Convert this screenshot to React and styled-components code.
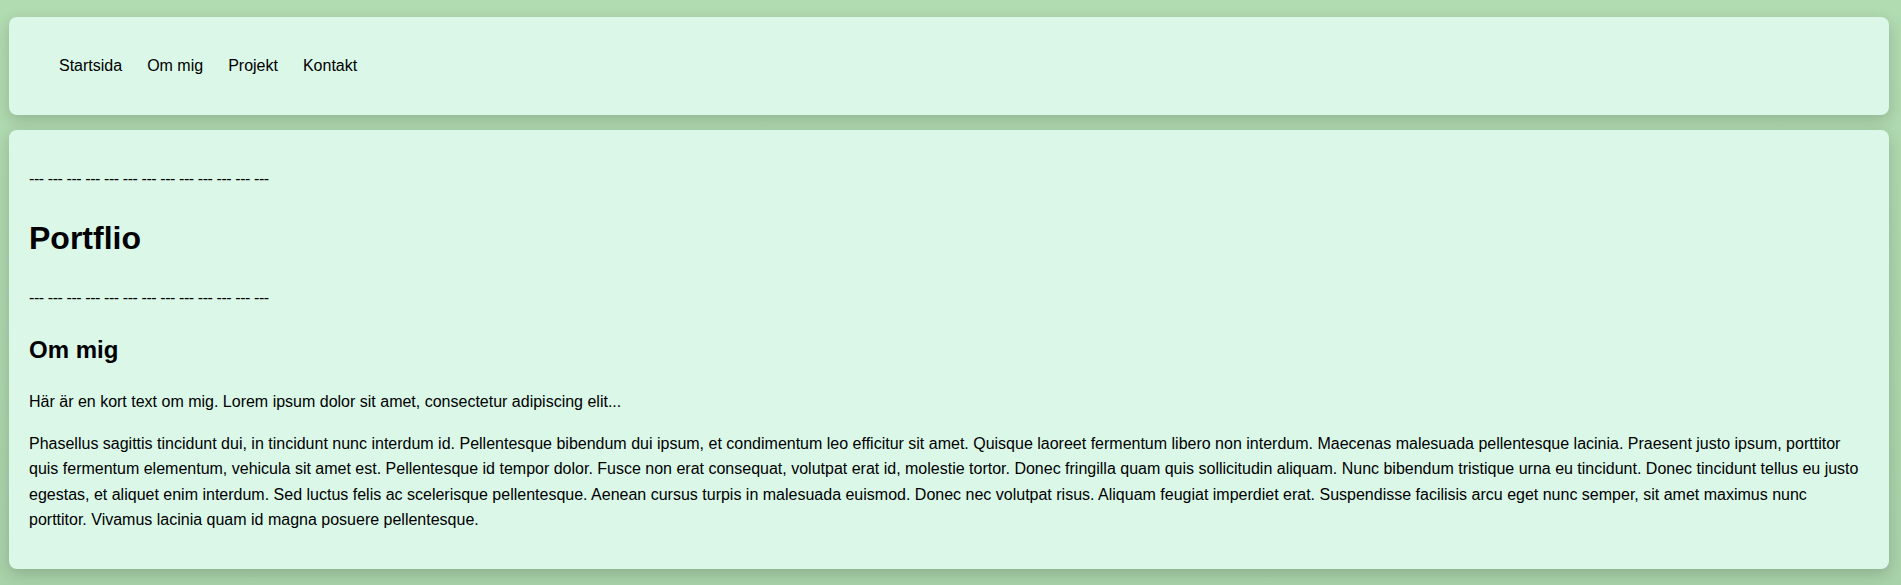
import React from "react";
import styled, { createGlobalStyle } from "styled-components";

const GlobalStyle = createGlobalStyle`
  html, body {
    margin: 0;
    padding: 0;
    background: linear-gradient(#b1dbb1, #a8d2a9);
  }
  body {
    font-family: "Liberation Sans", Arial, sans-serif;
    font-size: 16px;
    line-height: 1.6;
    color: #000;
  }
`;

const Page = styled.div`
  display: flex;
  flex-direction: column;
  gap: 15px;
  padding: 17px 12px 16px 9px;
  min-height: 585px;
  box-sizing: border-box;
`;

const Card = styled.div`
  background: #daf7e8;
  border-radius: 8px;
  box-shadow: 0 5px 15px rgba(0, 0, 0, 0.17);
  padding: ${(p) => p.$pad || "20px"};
`;

const NavList = styled.ul`
  display: flex;
  gap: 25px;
  list-style: none;
  margin: 16px 0;
  padding: 0 0 0 40px;
`;

const NavItem = styled.li`
  a {
    color: #000;
    text-decoration: none;
  }
`;

const Text = styled.p`
  margin: 16px 0;
  font-size: ${(p) => p.$size || "16px"};
  letter-spacing: ${(p) => p.$ls || "normal"};
`;

const Title = styled.h1`
  font-size: 32px;
  margin: 21.44px 0;
  font-weight: bold;
`;

const SubTitle = styled.h2`
  font-size: 24px;
  margin: 19.92px 0;
  font-weight: bold;
`;

const dashes = "--- --- --- --- --- --- --- --- --- --- --- --- ---";

export default function App() {
  return (
    <>
      <GlobalStyle />
      <Page>
        <Card as="header" $pad="20px 10px">
          <nav>
            <NavList>
              <NavItem><a href="#start">Startsida</a></NavItem>
              <NavItem><a href="#om">Om mig</a></NavItem>
              <NavItem><a href="#projekt">Projekt</a></NavItem>
              <NavItem><a href="#kontakt">Kontakt</a></NavItem>
            </NavList>
          </nav>
        </Card>
        <Card as="main">
          <Text $ls="-0.42px">{dashes}</Text>
          <Title>Portflio</Title>
          <Text $ls="-0.42px">{dashes}</Text>
          <SubTitle>Om mig</SubTitle>
          <Text>Här är en kort text om mig. Lorem ipsum dolor sit amet, consectetur adipiscing elit...</Text>
          <Text>
            Phasellus sagittis tincidunt dui, in tincidunt nunc interdum id. Pellentesque bibendum dui ipsum, et condimentum leo efficitur sit amet. Quisque laoreet fermentum libero non interdum. Maecenas malesuada pellentesque lacinia. Praesent justo ipsum, porttitor quis fermentum elementum, vehicula sit amet est. Pellentesque id tempor dolor. Fusce non erat consequat, volutpat erat id, molestie tortor. Donec fringilla quam quis sollicitudin aliquam. Nunc bibendum tristique urna eu tincidunt. Donec tincidunt tellus eu justo egestas, et aliquet enim interdum. Sed luctus felis ac scelerisque pellentesque. Aenean cursus turpis in malesuada euismod. Donec nec volutpat risus. Aliquam feugiat imperdiet erat. Suspendisse facilisis arcu eget nunc semper, sit amet maximus nunc porttitor. Vivamus lacinia quam id magna posuere pellentesque.
          </Text>
        </Card>
      </Page>
    </>
  );
}
